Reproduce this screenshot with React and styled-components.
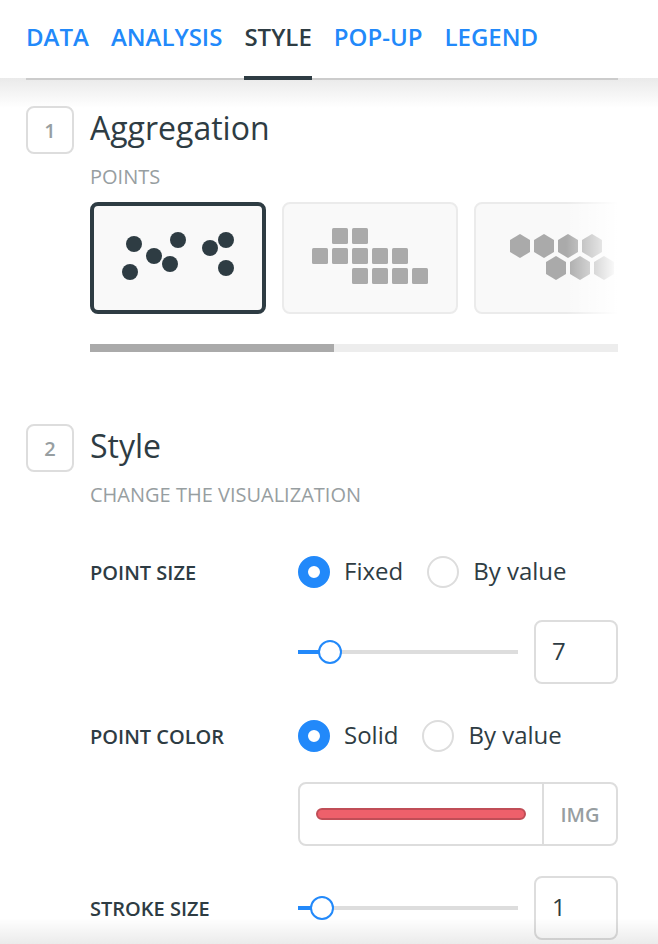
import React, { useState } from 'react';
import styled, { createGlobalStyle, ThemeProvider } from 'styled-components';

const theme = {
  colors: {
    text: '#2e3c43',
    muted: '#979ea1',
    blue: '#2289fa',
    border: '#dddddd',
    line: '#cccccc',
    icon: '#aaaaaa',
  },
  fontSizes: {
    small: '20px',
    base: '24px',
    title: '32px',
  },
};

const GlobalStyle = createGlobalStyle`
  * {
    box-sizing: border-box;
  }

  body {
    margin: 0;
    background: #fff;
    color: ${theme.colors.text};
    font-family: 'Open Sans', sans-serif;
    font-size: ${theme.fontSizes.base};
  }

  button, input {
    margin: 0;
    font-family: inherit;
  }
`;

const Panel = styled.div`
  display: flex;
  flex-direction: column;
  min-height: 100vh;
`;

const Tabs = styled.nav`
  position: relative;
  z-index: 1;
  display: flex;
  gap: 22px;
  margin: 0 40px -2px 26px;
  box-shadow: inset 0 -2px ${(props) => props.theme.colors.line};
`;

const Tab = styled.a`
  padding: 20px 0 22px;
  border-bottom: 4px solid ${(props) => (props.$active ? props.theme.colors.text : 'transparent')};
  color: ${(props) => (props.$active ? props.theme.colors.text : props.theme.colors.blue)};
  font-weight: 600;
  line-height: 34px;
  text-decoration: none;
`;

const Content = styled.main`
  position: relative;
  flex: 1;
  padding: 28px 40px 4px 26px;
  background: linear-gradient(#eaeaea, #fff) top / 100% 30px no-repeat;
`;

const BottomShadow = styled.div`
  position: absolute;
  right: 0;
  bottom: 0;
  left: 0;
  height: 26px;
  background: linear-gradient(rgba(0, 0, 0, 0), rgba(0, 0, 0, 0.08));
  pointer-events: none;
`;

const SectionWrapper = styled.section`
  display: grid;
  grid-template-columns: 48px minmax(0, 1fr);
  column-gap: 16px;

  & + & {
    margin-top: 72px;
  }
`;

const StepNumber = styled.div`
  height: 48px;
  border: 2px solid ${(props) => props.theme.colors.border};
  border-radius: 8px;
  color: ${(props) => props.theme.colors.muted};
  font-size: ${(props) => props.theme.fontSizes.small};
  font-weight: 600;
  line-height: 46px;
  text-align: center;
`;

const Title = styled.h2`
  margin: 0;
  font-size: ${(props) => props.theme.fontSizes.title};
  font-weight: 400;
  line-height: 44px;
`;

const Subtitle = styled.p`
  margin: 13px 0 0;
  color: ${(props) => props.theme.colors.muted};
  font-size: ${(props) => props.theme.fontSizes.small};
  line-height: 28px;
  text-transform: uppercase;
`;

const Carousel = styled.div`
  position: relative;
  display: flex;
  gap: 16px;
  margin-top: 11px;
  overflow: hidden;

  &::after {
    content: '';
    position: absolute;
    top: 0;
    right: 0;
    bottom: 0;
    width: 52px;
    background: linear-gradient(to right, rgba(255, 255, 255, 0), #fff);
    pointer-events: none;
  }
`;

const Card = styled.button`
  display: flex;
  flex: none;
  align-items: center;
  justify-content: center;
  width: 176px;
  height: 112px;
  padding: 0 0 4px;
  border: ${(props) => (props.$selected ? '4px' : '2px')} solid
    ${(props) => (props.$selected ? props.theme.colors.text : '#ebebeb')};
  border-radius: 8px;
  background: #f9f9f9;
  color: ${(props) => (props.$selected ? props.theme.colors.text : props.theme.colors.icon)};
  cursor: pointer;
`;

const ScrollTrack = styled.div`
  height: 8px;
  margin-top: 30px;
  background: #ededed;
`;

const ScrollThumb = styled.div`
  width: 46.2%;
  height: 100%;
  background: ${(props) => props.theme.colors.icon};
`;

const Form = styled.form`
  margin-top: 47px;
`;

const Field = styled.div`
  display: grid;
  grid-template-columns: 208px minmax(0, 1fr);
  row-gap: ${(props) => props.$rowGap || '30px'};
  align-items: center;
  margin-top: ${(props) => props.$marginTop || '0'};
`;

const FieldName = styled.span`
  padding-top: 2px;
  font-size: ${(props) => props.theme.fontSizes.small};
  font-weight: 600;
  line-height: 28px;
  text-transform: uppercase;
`;

const RadioGroup = styled.div`
  display: flex;
  gap: 24px;
`;

const RadioLabel = styled.label`
  display: flex;
  align-items: flex-start;
  gap: 14px;
  line-height: 30px;
  cursor: pointer;
`;

const Radio = styled.input`
  width: 32px;
  height: 32px;
  border: 2px solid ${(props) => props.theme.colors.border};
  border-radius: 50%;
  background: #fff;
  appearance: none;

  &:checked {
    border: 10px solid ${(props) => props.theme.colors.blue};
  }
`;

const SliderRow = styled.div`
  display: flex;
  grid-column: 2;
  align-items: center;
  gap: 16px;
`;

const Range = styled.input`
  flex: 1;
  min-width: 0;
  height: 24px;
  background: none;
  appearance: none;

  &::-webkit-slider-runnable-track {
    height: 4px;
    background: linear-gradient(
      to right,
      ${(props) => props.theme.colors.blue} var(--fill),
      ${(props) => props.theme.colors.border} var(--fill)
    );
  }

  &::-webkit-slider-thumb {
    width: 24px;
    height: 24px;
    margin-top: -10px;
    border: 2px solid ${(props) => props.theme.colors.blue};
    border-radius: 50%;
    background: #fff;
    appearance: none;
  }
`;

const NumberInput = styled.input`
  width: 84px;
  height: 64px;
  padding: 0 16px 4px;
  border: 2px solid ${(props) => props.theme.colors.border};
  border-radius: 8px;
  background: #fff;
  color: ${(props) => props.theme.colors.text};
  font-size: ${(props) => props.theme.fontSizes.base};
`;

const ColorPicker = styled.div`
  display: flex;
  grid-column: 2;
  height: 64px;
  border: 2px solid ${(props) => props.theme.colors.border};
  border-radius: 8px;
`;

const ColorButton = styled.button`
  flex: 1;
  padding: 0 16px;
  border: 0;
  background: none;
  cursor: pointer;
`;

const ColorBar = styled.span`
  display: block;
  height: 12px;
  border: 2px solid #c04e57;
  border-radius: 6px;
  background: #ee606b;
`;

const ImageButton = styled.button`
  width: 74px;
  padding: 0;
  border: 0;
  border-left: 2px solid ${(props) => props.theme.colors.border};
  background: none;
  color: ${(props) => props.theme.colors.muted};
  font-size: ${(props) => props.theme.fontSizes.small};
  font-weight: 600;
  cursor: pointer;
`;

const dots = [[12, 12], [32, 24], [56, 8], [48, 32], [8, 40], [88, 16], [104, 8], [104, 36]];

const squares = [
  [20, 0], [40, 0],
  [0, 20], [20, 20], [40, 20], [60, 20], [80, 20],
  [40, 40], [60, 40], [80, 40], [100, 40],
];

const hexagons = [[0, 2], [24, 2], [48, 2], [72, 2], [36, 24], [60, 24], [84, 24]];

const PointsIcon = () => (
  <svg width="112" height="48" fill="currentColor">
    {dots.map(([x, y]) => (
      <circle key={`${x}-${y}`} cx={x} cy={y} r="8" />
    ))}
  </svg>
);

const SquaresIcon = () => (
  <svg width="116" height="56" fill="currentColor">
    {squares.map(([x, y]) => (
      <rect key={`${x}-${y}`} x={x} y={y} width="16" height="16" rx="1.5" />
    ))}
  </svg>
);

const HexagonsIcon = () => (
  <svg width="104" height="48" fill="currentColor">
    {hexagons.map(([x, y]) => (
      <path key={`${x}-${y}`} d={`M${x + 10} ${y}l10 6v12l-10 6l-10 -6v-12z`} />
    ))}
  </svg>
);

const tabs = ['DATA', 'ANALYSIS', 'STYLE', 'POP-UP', 'LEGEND'];

const aggregations = [
  { id: 'points', label: 'Points', Icon: PointsIcon },
  { id: 'squares', label: 'Squares', Icon: SquaresIcon },
  { id: 'hexagons', label: 'Hexagons', Icon: HexagonsIcon },
];

const Section = ({ step, title, subtitle, children }) => (
  <SectionWrapper>
    <StepNumber>{step}</StepNumber>
    <div>
      <Title>{title}</Title>
      <Subtitle>{subtitle}</Subtitle>
      {children}
    </div>
  </SectionWrapper>
);

const Radios = ({ name, label, options }) => {
  const [value, setValue] = useState(options[0]);

  return (
    <RadioGroup role="radiogroup" aria-label={label}>
      {options.map((option) => (
        <RadioLabel key={option}>
          <Radio
            type="radio"
            name={name}
            checked={value === option}
            onChange={() => setValue(option)}
          />
          {option}
        </RadioLabel>
      ))}
    </RadioGroup>
  );
};

const Slider = ({ label, initial, max }) => {
  const [value, setValue] = useState(initial);
  const onChange = (e) => setValue(e.target.value);

  return (
    <SliderRow>
      <Range
        type="range"
        aria-label={label}
        min="0"
        max={max}
        value={value}
        onChange={onChange}
        style={{ '--fill': `${(value / max) * 100}%` }}
      />
      <NumberInput type="text" aria-label={label} value={value} onChange={onChange} />
    </SliderRow>
  );
};

const App = () => {
  const [activeTab, setActiveTab] = useState('STYLE');
  const [aggregation, setAggregation] = useState('points');

  return (
    <ThemeProvider theme={theme}>
      <GlobalStyle />
      <Panel>
        <Tabs>
          {tabs.map((tab) => (
            <Tab
              key={tab}
              href={`#${tab.toLowerCase()}`}
              $active={tab === activeTab}
              onClick={() => setActiveTab(tab)}
            >
              {tab}
            </Tab>
          ))}
        </Tabs>
        <Content>
          <Section step="1" title="Aggregation" subtitle={aggregation}>
            <Carousel>
              {aggregations.map(({ id, label, Icon }) => (
                <Card
                  key={id}
                  type="button"
                  aria-label={label}
                  aria-pressed={id === aggregation}
                  $selected={id === aggregation}
                  onClick={() => setAggregation(id)}
                >
                  <Icon />
                </Card>
              ))}
            </Carousel>
            <ScrollTrack>
              <ScrollThumb />
            </ScrollTrack>
          </Section>

          <Section step="2" title="Style" subtitle="Change the visualization">
            <Form>
              <Field $rowGap="32px">
                <FieldName>Point size</FieldName>
                <Radios name="size" label="Point size" options={['Fixed', 'By value']} />
                <Slider label="Point size" initial={7} max={68} />
              </Field>
              <Field $marginTop="36px">
                <FieldName>Point color</FieldName>
                <Radios name="color" label="Point color" options={['Solid', 'By value']} />
                <ColorPicker>
                  <ColorButton type="button" aria-label="Point color">
                    <ColorBar />
                  </ColorButton>
                  <ImageButton type="button">IMG</ImageButton>
                </ColorPicker>
              </Field>
              <Field $marginTop="30px">
                <FieldName>Stroke size</FieldName>
                <Slider label="Stroke size" initial={1} max={16} />
              </Field>
            </Form>
          </Section>
          <BottomShadow />
        </Content>
      </Panel>
    </ThemeProvider>
  );
};

export default App;
